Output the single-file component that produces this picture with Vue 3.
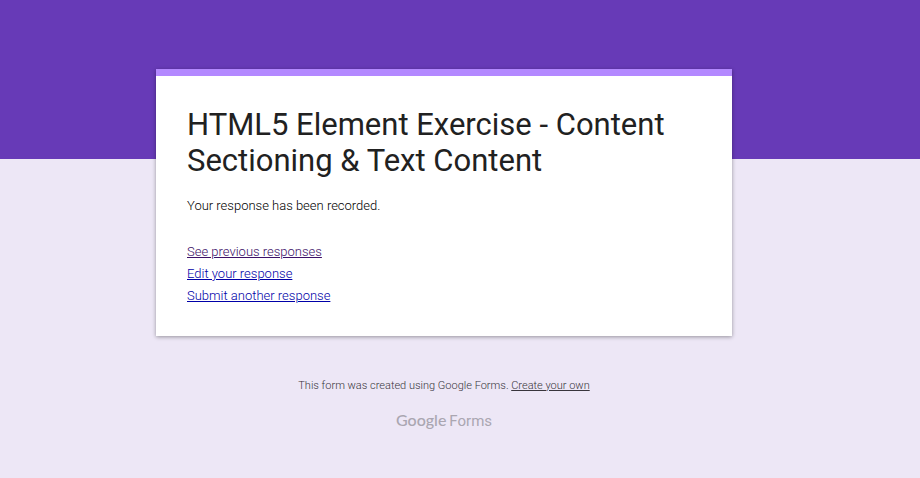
<script setup>
const title = 'HTML5 Element Exercise - Content Sectioning & Text Content'
const links = [
  { label: 'See previous responses', visited: true },
  { label: 'Edit your response', visited: false },
  { label: 'Submit another response', visited: false },
]
</script>

<template>
  <div class="page">
    <main class="card">
      <h1 class="title">{{ title }}</h1>
      <p class="message">Your response has been recorded.</p>
      <nav class="links">
        <a v-for="link in links" :key="link.label" href="#" :class="{ visited: link.visited }">{{ link.label }}</a>
      </nav>
    </main>
    <footer class="footer">
      <p class="credit">This form was created using Google Forms. <a href="#">Create your own</a></p>
      <a class="logo" href="#"><span class="brand">Google</span><span class="product">Forms</span></a>
    </footer>
  </div>
</template>

<style>
body {
  background: #ede7f6;
}
</style>

<style scoped>
.page {
  min-height: 100vh;
  box-sizing: border-box;
  padding: 69px 188px 0 156px;
  background: linear-gradient(#673ab7, #673ab7) top / 100% 159px no-repeat #ede7f6;
  font-family: Roboto, "Liberation Sans", sans-serif;
}
.card {
  padding: 31px 31px 29px;
  border-top: 7px solid #b388ff;
  background: #fff;
  box-shadow: 0 1px 4px rgba(0, 0, 0, 0.37);
  color: #212121;
}
.title {
  margin: 0;
  font-size: 31px;
  font-weight: 400;
  line-height: 36px;
}
.message {
  margin: 16px 0 24px;
  color: #000;
  font-size: 13px;
  font-weight: 300;
  line-height: 22px;
}
.links {
  display: flex;
  flex-direction: column;
  align-items: flex-start;
  font-size: 13px;
  font-weight: 300;
  line-height: 22px;
}
.links a {
  color: #0000a8;
}
.links .visited {
  color: #3c1068;
}
.footer {
  display: flex;
  flex-direction: column;
  align-items: center;
  padding-top: 41px;
  color: #38353c;
}
.credit {
  margin: 0;
  font-size: 11px;
  font-weight: 300;
  line-height: 18px;
}
.credit a {
  color: inherit;
}
.logo {
  display: flex;
  align-items: baseline;
  gap: 3px;
  margin-top: 15px;
  color: #aaa6b1;
  font-size: 15px;
  line-height: 20px;
  text-decoration: none;
}
.brand {
  font-family: Lato, sans-serif;
  font-size: 16px;
  font-weight: 500;
}
</style>
